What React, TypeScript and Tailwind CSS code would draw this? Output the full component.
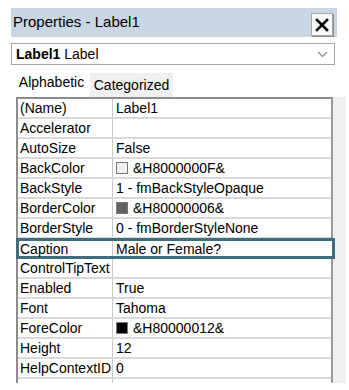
import React from 'react'

type Row = { name: string; value: string; swatch?: string; selected?: boolean }

const rows: Row[] = [
  { name: '(Name)', value: 'Label1' },
  { name: 'Accelerator', value: '' },
  { name: 'AutoSize', value: 'False' },
  { name: 'BackColor', value: '&H8000000F&', swatch: '#f0f0f0' },
  { name: 'BackStyle', value: '1 - fmBackStyleOpaque' },
  { name: 'BorderColor', value: '&H80000006&', swatch: '#646464' },
  { name: 'BorderStyle', value: '0 - fmBorderStyleNone' },
  { name: 'Caption', value: 'Male or Female?', selected: true },
  { name: 'ControlTipText', value: '' },
  { name: 'Enabled', value: 'True' },
  { name: 'Font', value: 'Tahoma' },
  { name: 'ForeColor', value: '&H80000012&', swatch: '#000000' },
  { name: 'Height', value: '12' },
  { name: 'HelpContextID', value: '0' },
  { name: '', value: '' },
]

function GridRow({ row }: { row: Row }) {
  if (row.selected) {
    return (
      <div className="relative -mt-[1px] -ml-[2px] -mr-[4px] flex h-[21px] items-center border-[3px] border-[#3f6d7e] bg-white">
        <div className="flex h-full w-[94px] shrink-0 items-center border-r border-[#c9c9c9] pl-[1px] leading-none">
          {row.name}
        </div>
        <div className="flex h-full items-center pl-[3px] leading-none whitespace-nowrap">{row.value}</div>
      </div>
    )
  }
  return (
    <div className="flex h-[20px] items-center border-b-2 border-[#d9d9d9] bg-white">
      <div className="flex h-full w-[95px] shrink-0 items-center border-r border-[#c9c9c9] pl-[2px] leading-none">
        {row.name}
      </div>
      <div className="flex h-full items-center pl-[3px] leading-none whitespace-nowrap">
        {row.swatch && (
          <span
            className="mr-[5px] inline-block h-[12px] w-[12px] border border-[#7a7a7a]"
            style={{ backgroundColor: row.swatch }}
          />
        )}
        {row.value}
      </div>
    </div>
  )
}

export default function App() {
  return (
    <div
      className="h-[390px] w-[349px] overflow-hidden bg-white pt-[8px] pl-[11px] text-black"
      style={{ fontFamily: '"Liberation Sans", Arial, sans-serif' }}
    >
      {/* title bar */}
      <div className="flex h-[29px] w-[326px] items-center justify-between bg-[#c9d6e3] pl-[2px] pr-[4px]">
        <span className="text-[15px]">Properties - Label1</span>
        <button className="mt-[4px] flex h-[23px] w-[22px] items-center justify-center border border-[#a9a9a9] bg-[#f7f7f7] shadow-[1px_1px_0_#8a8a8a]">
          <svg width="14" height="14" viewBox="0 0 14 14">
            <path d="M2 2 L12 12 M12 2 L2 12" stroke="#000" strokeWidth="2.6" strokeLinecap="square" />
          </svg>
        </button>
      </div>

      {/* object combo */}
      <div className="mt-[6px] flex h-[22px] w-[324px] items-center justify-between border border-[#a6a6a6] bg-white pl-[4px] pr-[6px] text-[14px]">
        <span>
          <b>Label1</b> Label
        </span>
        <svg width="11" height="7" viewBox="0 0 11 7">
          <path d="M1 1 L5.5 5.5 L10 1" fill="none" stroke="#8a8a8a" strokeWidth="1.1" />
        </svg>
      </div>

      {/* tabs */}
      <div className="mt-[2px] flex h-[30px] items-end text-[14px]">
        <div className="flex h-[30px] w-[79px] items-center justify-center bg-white pl-[2px]">Alphabetic</div>
        <div className="flex h-[24px] w-[83px] items-center justify-center bg-[#f0f0f0]">Categorized</div>
      </div>

      {/* grid */}
      <div className="flex h-[286px] overflow-hidden">
        <div className="ml-[5px] h-[300px] w-[317px] border-t-2 border-l-2 border-r-2 border-t-[#8c8c8c] border-l-[#8c8c8c] border-r-[#9a9a9a] bg-white text-[14px]">
          {rows.map((r, i) => (
            <GridRow key={i} row={r} />
          ))}
        </div>
        <div className="h-full w-[13px] bg-[#f0f0f0]" />
      </div>
    </div>
  )
}
